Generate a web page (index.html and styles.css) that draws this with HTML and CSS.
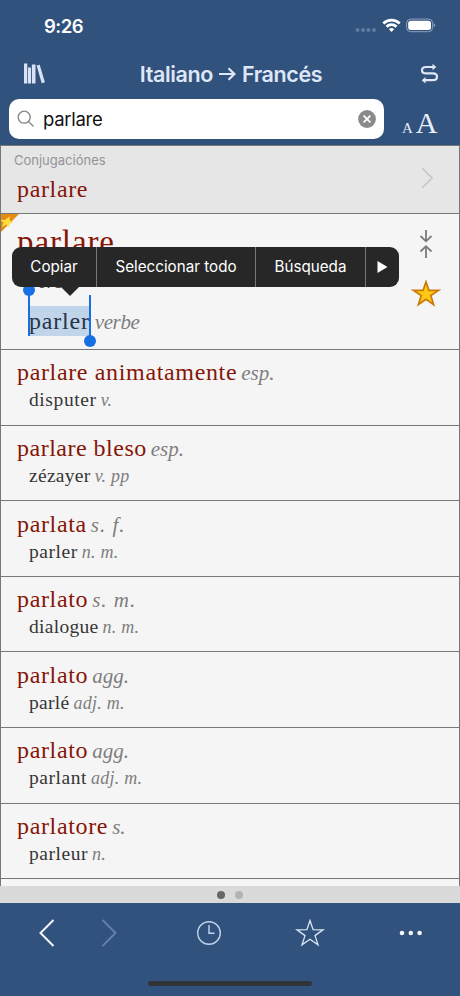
FILE: index.html
```html
<!DOCTYPE html>
<html lang="es">
<head>
<meta charset="utf-8">
<title>Italiano → Francés</title>
<link rel="stylesheet" href="styles.css">
</head>
<body>
<div class="app">
  <header class="top">
    <div class="status">
      <span class="time">9:26</span>
      <svg class="status-icons" width="82" height="18" viewBox="0 0 82 18">
        <g fill="#5f7ba2"><circle cx="2.500" cy="13" r="2"/><circle cx="8" cy="13" r="2"/><circle cx="13.500" cy="13" r="2"/><circle cx="19" cy="13" r="2"/></g>
        <g fill="none" stroke="#fff" stroke-width="2.800"><path d="M28.300 6.400a12 12 0 0 1 16.400 0"/><path d="M31.500 9.700a7.300 7.300 0 0 1 10 0"/></g>
        <path fill="#fff" d="M36.500 14.900l-2.600-2.700a3.800 3.800 0 0 1 5.200 0z"/>
        <rect x="51.600" y="2.100" width="26" height="12.600" rx="4" fill="none" stroke="#8ea2c0"/>
        <rect x="53.200" y="3.700" width="22.800" height="9.400" rx="2.500" fill="#fff"/>
        <path fill="#8ea2c0" d="M78.800 6.300c1.900.7 1.900 3.500 0 4.200z"/>
      </svg>
    </div>
    <div class="navbar">
      <svg class="books" width="24" height="24" viewBox="0 0 24 24" fill="#d9e2f3"><path d="M1 1.500h3.300v20H1zM5 5.500h3v16H5zM8.900 2.500h3.600v19H8.900zM13.600 3.600l3.100-.9 5.200 17.600-3.200 1z"/></svg>
      <h1 class="title"><span>Italiano</span>
        <svg width="17" height="16" viewBox="0 0 17 16" fill="none" stroke="#dfe7f7" stroke-width="2.200"><path d="M0 8h15M9.500 2.300L15.400 8l-5.900 5.700"/></svg>
        <span>Francés</span></h1>
      <svg class="swap" width="20" height="22" viewBox="0 0 20 22" fill="none" stroke="#dfe7f7" stroke-width="2.200"><path d="M15 4H7.200Q3 4 3 7.200T7.200 10.400h6.600q4.200 0 4.200 3.400T13.800 17.200H6"/><path fill="#dfe7f7" stroke="none" d="M13.500 .8l3.800 3.200-3.800 3.200zM6.500 14L2.700 17.200 6.500 20.400z"/></svg>
    </div>
    <div class="search-row">
      <div class="search">
        <svg width="18" height="18" viewBox="0 0 18 18" fill="none" stroke="#858589" stroke-width="1.300"><circle cx="7.200" cy="7.200" r="6"/><path d="M11.500 11.500l5 5"/></svg>
        <span class="query">parlare</span>
        <svg width="18" height="18" viewBox="0 0 18 18"><circle cx="9" cy="9" r="8.900" fill="#8a8a8c"/><path d="M5.600 5.600l6.800 6.800m0-6.800l-6.800 6.800" stroke="#fff" stroke-width="1.800"/></svg>
      </div>
      <div class="text-size"><span class="small-a">A</span><span class="big-a">A</span></div>
    </div>
  </header>

  <main class="list">
    <section class="conj">
      <div><div class="label">Conjugaciónes</div><div class="word">parlare</div></div>
      <svg width="12" height="22" viewBox="0 0 12 22" fill="none" stroke="#c7c7c9" stroke-width="1.600"><path d="M1 1l10 10L1 21"/></svg>
    </section>
    <section class="entry">
      <svg class="ribbon" width="19" height="19" viewBox="0 0 19 19"><path fill="#e58b12" d="M0 0h19L0 19z"/><path fill="#ffdd3c" d="M9.600 2.200l.2 4.600 4 1.100-4.200 1.700-.3 3.200L6.700 10.500 1.800 13l1.800-4.300L0 5.800l5 .1z"/></svg>
      <div class="entry-main">
        <div class="headword">parlare</div>
        <div class="pos">verbo</div>
        <div class="translation"><span class="selected">parler<i class="handle start"></i><i class="handle end"></i></span><em>verbe</em></div>
      </div>
      <div class="entry-tools">
        <svg width="14" height="30" viewBox="0 0 14 30" fill="none" stroke="#7b7b7b" stroke-width="1.800"><path d="M7 1v11M1.500 7L7 12.300 12.500 7M7 29V17.500M1.500 22.500L7 17.200l5.500 5.300"/></svg>
        <svg width="30" height="28" viewBox="0 0 30 28"><path d="M15 2.800l2.900 8.500 9.600.1-7.700 5.200 2.800 9L15 20.200l-7.600 5.400 2.800-9-7.700-5.200 9.600-.1z" fill="#ffc814" stroke="#c97a0b" stroke-width="1.700"/></svg>
      </div>
      <div class="menu"><span>Copiar</span><span>Seleccionar todo</span><span>Búsqueda</span><span><svg width="11" height="12" viewBox="0 0 11 12"><path d="M.5 0L10.500 6 .5 12z" fill="#fff"/></svg></span></div>
    </section>
    <section class="row"><div class="word">parlare animatamente<em>esp.</em></div><div class="sub wide">disputer<em>v.</em></div></section>
    <section class="row"><div class="word tight">parlare bleso<em>esp.</em></div><div class="sub">zézayer<em>v. pp</em></div></section>
    <section class="row"><div class="word">parlata<em class="loose">s. f.</em></div><div class="sub mid">parler<em>n. m.</em></div></section>
    <section class="row"><div class="word">parlato<em class="loose">s. m.</em></div><div class="sub">dialogue<em>n. m.</em></div></section>
    <section class="row"><div class="word">parlato<em>agg.</em></div><div class="sub">parlé<em>adj. m.</em></div></section>
    <section class="row"><div class="word">parlato<em>agg.</em></div><div class="sub mid">parlant<em>adj. m.</em></div></section>
    <section class="row"><div class="word">parlatore<em>s.</em></div><div class="sub mid">parleur<em>n.</em></div></section>
  </main>
  <div class="pages"><i class="on"></i><i></i></div>
  <footer class="toolbar">
    <svg width="460" height="60" viewBox="0 0 460 60" fill="none">
      <path d="M53.500 17L40.500 30l13 13" stroke="#f1f5fc" stroke-width="2"/>
      <path d="M102.500 17l13 13-13 13" stroke="#6280ab" stroke-width="2"/>
      <g stroke="#c5d5ed" stroke-width="1.400"><circle cx="209" cy="30" r="11.300"/><path d="M209 22v8.200h5.500"/></g>
      <path d="M310 17.500l3.100 9.200 9.900.1-8 5.800 3 9.300-8-5.600-8 5.600 3-9.300-8-5.800 9.900-.1z" stroke="#dbe6f7" stroke-width="1.300"/>
      <g fill="#f3f6fb"><circle cx="402" cy="30" r="2.300"/><circle cx="410.800" cy="30" r="2.300"/><circle cx="419.600" cy="30" r="2.300"/></g>
    </svg>
    <div class="home"></div>
  </footer>
</div>
</body>
</html>
```
FILE: styles.css
```css
* { box-sizing: border-box; }
body { margin: 0; background: #31527c; font-family: Inter, "Liberation Sans", sans-serif; }
.app { width: 460px; height: 996px; display: flex; flex-direction: column; overflow: hidden; background: #31527c; }
.top { height: 145px; flex: none; }
.status { height: 50px; display: flex; justify-content: space-between; padding: 14px 23px 0 44px; color: #fff; }
.time { font-size: 18.500px; font-weight: 600; line-height: 24px; letter-spacing: -.5px; }
.status-icons { margin-top: 3px; }
.navbar { height: 48px; display: flex; align-items: center; justify-content: space-between; padding: 0 21px 0 23px; }
.title { display: flex; align-items: center; gap: 6px; margin: 0 4px 0 0; color: #dfe7f7; font-size: 21.500px; font-weight: 600; letter-spacing: -.38px; line-height: 28px; }
.search-row { display: flex; gap: 18px; padding: 1px 23px 0 9px; }
.search { width: 375px; height: 40px; flex: none; display: flex; align-items: center; padding: 0 8px; background: #fff; border-radius: 10px; }
.query { flex: 1; margin-left: 8px; font-size: 18.500px; line-height: 24px; letter-spacing: -.3px; color: #111; }
.text-size { display: flex; align-items: baseline; gap: 3px; color: #e5edfa; font-family: "Liberation Serif", serif; height: 40px; line-height: 48px; }
.small-a { font-size: 15px; }
.big-a { font-size: 30px; }

.list { height: 741px; flex: none; overflow: hidden; border: 1px solid #777; border-bottom: 0; background: #f5f5f5; font-family: "Liberation Serif", serif; }
.conj { height: 68px; display: flex; justify-content: space-between; padding: 5px 26px 0 13px; background: #e6e6e6; border-bottom: 1px solid #777; }
.conj svg { margin-top: 16px; }
.conj .label { font-family: Inter, "Liberation Sans", sans-serif; font-size: 13px; line-height: 19px; color: #949496; }
.conj .word { padding: 5px 0 0 3px; }
.word { font-size: 24px; line-height: 28px; letter-spacing: .65px; color: #861508; white-space: nowrap; }
.word.tight { letter-spacing: .5px; }
em { color: #7e7e7e; font-style: italic; }
.word em { margin-left: 4px; font-size: 21px; letter-spacing: 0; }
.word em.loose { letter-spacing: 1px; }

.entry { position: relative; height: 136px; display: flex; justify-content: space-between; padding: 0 18px 0 16px; border-bottom: 1px solid #777; }
.ribbon { position: absolute; left: -1px; top: 0; }
.headword { margin-top: 8px; font-size: 33px; line-height: 40px; letter-spacing: .9px; color: #861508; }
.pos { margin: 9px 0 0 12px; font-size: 20px; line-height: 20px; color: #444; font-style: italic; }
.translation { margin: 15px 0 0 12px; font-size: 24px; line-height: 30px; letter-spacing: .8px; color: #283446; }
.translation em { margin-left: 5px; font-size: 21px; letter-spacing: -.4px; }
.selected { position: relative; display: inline-block; background: #c0d5e9; }
.handle { position: absolute; width: 2px; background: #1670e4; }
.handle.start { left: -1px; top: -13px; height: 43px; }
.handle.end { right: -1px; top: -11px; height: 43px; }
.handle::after { content: ""; position: absolute; left: -5px; width: 12px; height: 12px; border-radius: 50%; background: #1670e4; }
.handle.start::after { top: -9px; }
.handle.end::after { bottom: -9px; }
.entry-tools { width: 30px; display: flex; flex-direction: column; align-items: center; gap: 20px; padding-top: 15px; }
.menu { position: absolute; left: 11px; top: 33px; width: 387px; height: 40px; display: flex; border-radius: 9px; background: #272727; color: #fff; font: 15.200px/40px Inter, "Liberation Sans", sans-serif; }
.menu span { display: flex; align-items: center; justify-content: center; border-right: 1px solid #777; }
.menu span:nth-child(1) { width: 85px; }
.menu span:nth-child(2) { width: 159px; }
.menu span:nth-child(3) { width: 110px; }
.menu span:nth-child(4) { width: 33px; border: 0; }
.menu::after { content: ""; position: absolute; left: 48px; top: 39px; border: 10px solid transparent; border-top-color: #272727; border-bottom: 0; }

.row { height: 75.600px; padding: 8.400px 16px 0; border-bottom: 1px solid #777; }
.sub { margin-left: 12px; font-size: 19.500px; line-height: 26px; letter-spacing: .3px; color: #363636; white-space: nowrap; }
.sub.mid { letter-spacing: .55px; }
.sub.wide { letter-spacing: .6px; }
.sub em { margin-left: 4px; font-size: 18px; letter-spacing: .25px; }

.pages { height: 17px; flex: none; display: flex; align-items: center; justify-content: center; gap: 10px; background: #dadada; }
.pages i { width: 8px; height: 8px; border-radius: 50%; background: #b3b3b3; }
.pages .on { background: #666; }
.toolbar { height: 93px; display: flex; flex-direction: column; align-items: center; }
.home { width: 164px; height: 5px; margin-top: 18px; border-radius: 3px; background: #303439; }
```
